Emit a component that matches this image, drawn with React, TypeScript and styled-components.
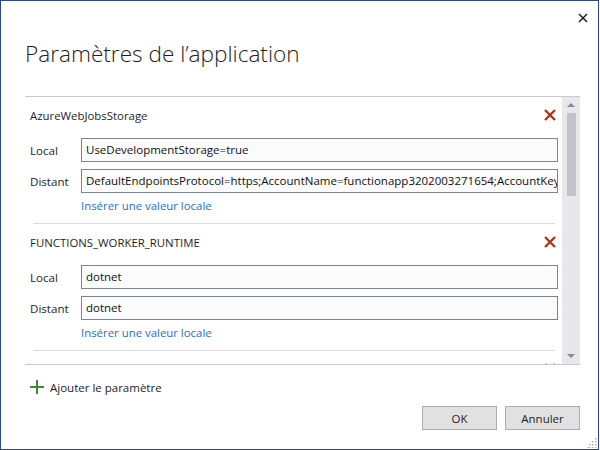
import React, {FC} from 'react';
import styled, {createGlobalStyle} from "styled-components";

interface ISetting {
    name: string;
    local: string;
    remote: string;
}

const settings: ISetting[] = [
    {
        name: 'AzureWebJobsStorage',
        local: 'UseDevelopmentStorage=true',
        remote: 'DefaultEndpointsProtocol=https;AccountName=functionapp3202003271654;AccountKey=7cXqL2m0Zb9pQ==;EndpointSuffix=core.windows.net'
    },
    {name: 'FUNCTIONS_WORKER_RUNTIME', local: 'dotnet', remote: 'dotnet'},
    {name: 'WEBSITE_CONTENTSHARE', local: '', remote: 'functionapp3202003271654'},
]

const CloseIcon = () => (
    <svg width="10" height="10" viewBox="0 0 10 10">
        <path d="M1 1 L9 9 M9 1 L1 9" stroke="#1e1e1e" strokeWidth="1.5" fill="none"/>
    </svg>
)

const RemoveIcon = () => (
    <svg width="12" height="12" viewBox="0 0 12 12">
        <path d="M1 1 L11 11 M11 1 L1 11" stroke="#b5300f" strokeWidth="2.3" fill="none"/>
    </svg>
)

const PlusIcon = () => (
    <svg width="14" height="14" viewBox="0 0 14 14">
        <path d="M7 0 V14 M0 7 H14" stroke="#3a8a34" strokeWidth="2" fill="none"/>
    </svg>
)

const Grip = () => (
    <svg width="10" height="10" viewBox="0 0 10 10">
        {[[8, 0], [5, 3], [8, 3], [2, 6], [5, 6], [8, 6], [0, 9], [2, 9], [5, 9], [8, 9]].map(([x, y], i) => (
            <rect key={i} x={x} y={y} width="1.5" height="1.5" fill="#a9b4cf"/>
        ))}
    </svg>
)

const SettingItem: FC<{ setting: ISetting }> = ({setting}) => (
    <>
        <Item>
            <ItemHeader>
                <span>{setting.name}</span>
                <RemoveIcon/>
            </ItemHeader>
            <Fields>
                <Label>Local</Label>
                <Field>{setting.local}</Field>
                <Label>Distant</Label>
                <Field>{setting.remote}</Field>
            </Fields>
            <Link>Insérer une valeur locale</Link>
        </Item>
        <Divider/>
    </>
)

const App: FC = () => {
    return (
        <>
            <GlobalStyle/>
            <Window>
                <TitleBar>
                    <CloseButton><CloseIcon/></CloseButton>
                </TitleBar>
                <Title>Paramètres de l’application</Title>

                <List>
                    <Scroller>
                        {settings.map(s => <SettingItem key={s.name} setting={s}/>)}
                    </Scroller>
                    <ScrollBar>
                        <Arrow $up/>
                        <Thumb/>
                        <Track/>
                        <Arrow/>
                    </ScrollBar>
                </List>

                <AddRow>
                    <PlusIcon/>
                    <span>Ajouter le paramètre</span>
                </AddRow>

                <Buttons>
                    <Button>OK</Button>
                    <Button>Annuler</Button>
                </Buttons>

                <GripCorner><Grip/></GripCorner>
            </Window>
        </>
    );
};

const GlobalStyle = createGlobalStyle`
  html, body {
    margin: 0;
    padding: 0;
    background: #ffffff;
  }

  body {
    font-family: "Open Sans", "Noto Sans", sans-serif;
  }
`

const Window = styled.div`
  position: relative;
  width: 599px;
  height: 450px;
  box-sizing: border-box;
  border: 1px solid #2b4a86;
  background: #ffffff;
  display: flex;
  flex-direction: column;
  color: #1e1e1e;
  font-size: 11.4px;
`

const TitleBar = styled.div`
  height: 38px;
  display: flex;
  justify-content: flex-end;
  align-items: flex-start;
  padding: 12px 10px 0 0;
  box-sizing: border-box;
`

const CloseButton = styled.div`
  width: 10px;
  height: 10px;
  display: flex;
`

const Title = styled.h1`
  margin: 0;
  padding-left: 24px;
  height: 30px;
  line-height: 30px;
  font-size: 22.6px;
  font-weight: 300;
  color: #1e1e1e;
`

const List = styled.div`
  margin: 27px 18px 0 24px;
  height: 269px;
  box-sizing: border-box;
  border-top: 1px solid #c5c9d8;
  border-bottom: 1px solid #c5c9d8;
  display: flex;
`

const Scroller = styled.div`
  flex: 1;
  overflow: hidden;
`

const ScrollBar = styled.div`
  width: 18px;
  background: #e8e8ec;
  display: flex;
  flex-direction: column;
  align-items: center;
`

const Arrow = styled.div<{ $up?: boolean }>`
  width: 0;
  height: 0;
  margin: 6px 0;
  border-left: 4.5px solid transparent;
  border-right: 4.5px solid transparent;
  ${({$up}) => $up ? 'border-bottom: 4px solid #868999;' : 'border-top: 4px solid #868999;'}
`

const Thumb = styled.div`
  width: 9px;
  height: 83px;
  background: #c2c3c9;
`

const Track = styled.div`
  flex: 1;
`

const Item = styled.div`
  padding: 0 4px 9px 5px;
`

const ItemHeader = styled.div`
  height: 36px;
  display: flex;
  align-items: center;
  justify-content: space-between;
  padding-right: 2px;
`

const Fields = styled.div`
  margin-top: 5px;
  display: grid;
  grid-template-columns: 51px 1fr;
  row-gap: 7px;
  align-items: center;
`

const Label = styled.div`
  font-size: 11.6px;
`

const Field = styled.div`
  height: 24px;
  box-sizing: border-box;
  border: 1px solid #7b8494;
  background: #fbfbfb;
  padding: 0 4px;
  line-height: 22px;
  white-space: nowrap;
  overflow: hidden;
  color: #111111;
  font-size: 11.5px;
`

const Link = styled.div`
  margin: 5px 0 0 51px;
  height: 16px;
  line-height: 16px;
  color: #1f6fc5;
`

const Divider = styled.div`
  height: 1px;
  background: #dcdde3;
  margin: 0 7px 0 8px;
`

const AddRow = styled.div`
  margin-top: 11px;
  height: 22px;
  padding-left: 29px;
  display: flex;
  align-items: center;
  gap: 6px;
  font-size: 11.5px;
`

const Buttons = styled.div`
  margin-top: 8px;
  padding-right: 18px;
  display: flex;
  justify-content: flex-end;
  gap: 8px;
`

const Button = styled.button`
  width: 75px;
  height: 24px;
  box-sizing: border-box;
  border: 1px solid #adadad;
  background: #e1e1e1;
  font-family: inherit;
  font-size: 11.5px;
  color: #1e1e1e;
  padding: 0;
`

const GripCorner = styled.div`
  position: absolute;
  right: 1px;
  bottom: 1px;
  display: flex;
`

export default App;
